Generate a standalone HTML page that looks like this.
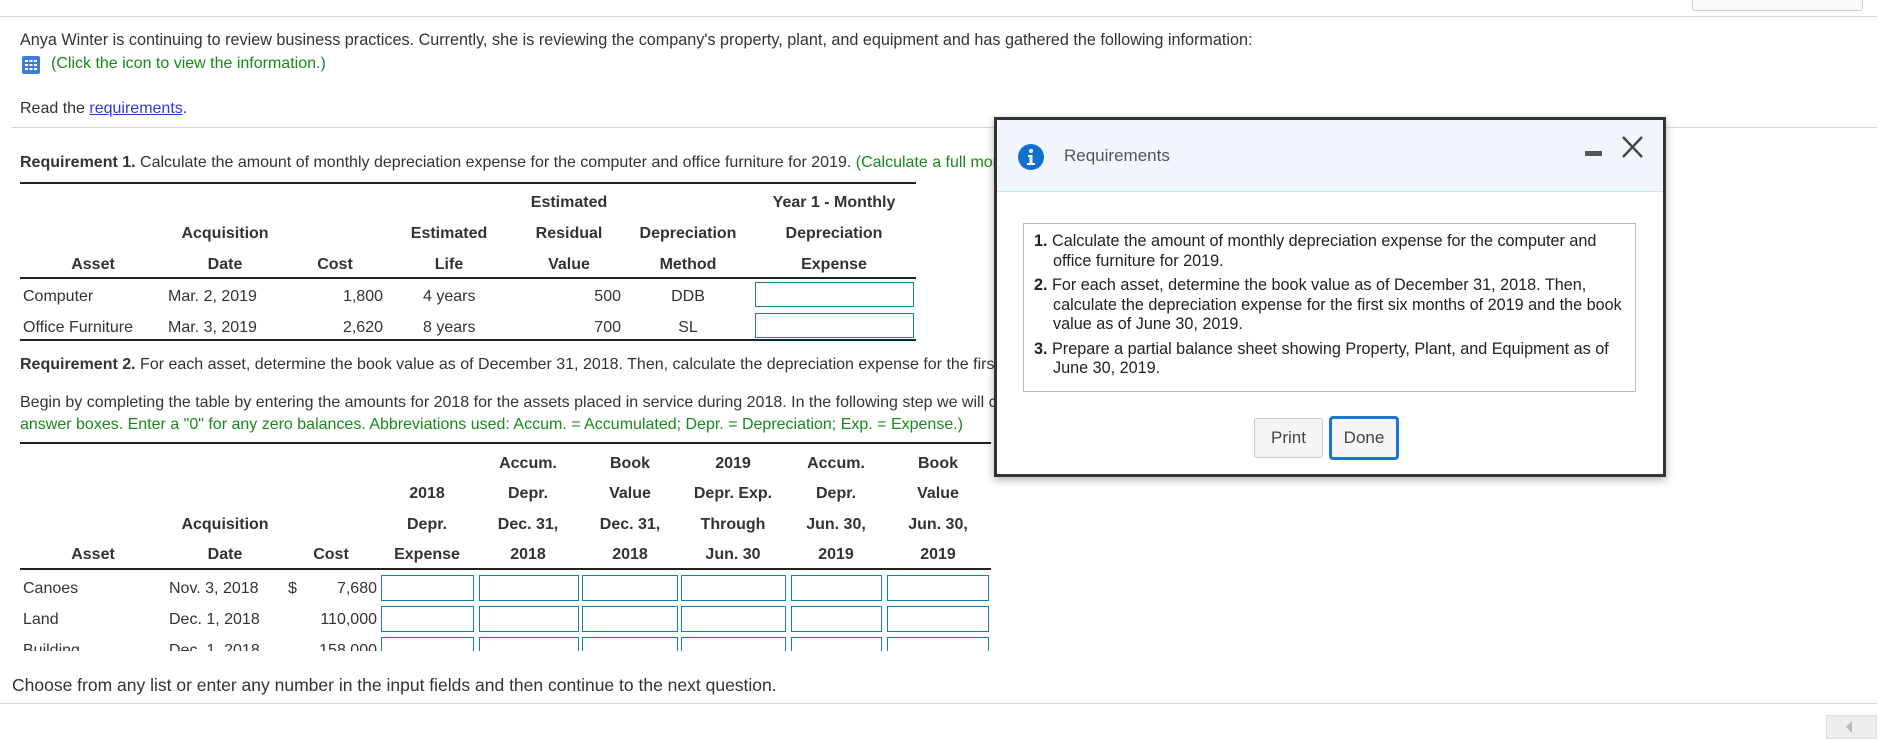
<!DOCTYPE html>
<html><head><meta charset="utf-8"><style>
*{margin:0;padding:0;box-sizing:border-box}
body{width:1877px;height:737px;overflow:hidden;background:#fff;font-family:"Liberation Sans",Arial,sans-serif;font-size:16px;color:#333;position:relative}
.a{position:absolute;white-space:nowrap}
.g{color:#17891a}
.hl{position:absolute;height:2px;background:#222}
.b{font-weight:bold}
.c{transform:translateX(-50%)}
.r{transform:translateX(-100%)}
.in{position:absolute;border:1px solid #1a7ea8;background:#fff}
</style></head><body>
<div style="position:absolute;left:1692px;top:-2px;width:171px;height:13px;border:1px solid #ccc;border-radius:3px;background:#fafafa"></div>
<div style="position:absolute;left:0;top:16px;width:1877px;height:1px;background:#d4d4dc"></div>

<div class="a" style="left:20px;top:31px;font-size:16.2px">Anya Winter is continuing to review business practices. Currently, she is reviewing the company's property, plant, and equipment and has gathered the following information:</div>
<svg class="a" style="left:22px;top:56px" width="18" height="18" viewBox="0 0 18 18"><rect width="18" height="18" rx="2" fill="#3a7fd5"/><g fill="#fff"><rect x="3" y="4" width="3" height="2"/><rect x="7.5" y="4" width="3" height="2"/><rect x="12" y="4" width="3" height="2"/><rect x="3" y="8" width="3" height="2"/><rect x="7.5" y="8" width="3" height="2"/><rect x="12" y="8" width="3" height="2"/><rect x="3" y="12" width="3" height="2"/><rect x="7.5" y="12" width="3" height="2"/><rect x="12" y="12" width="3" height="2"/></g></svg>
<div class="a g" style="left:51px;top:55px">(Click the icon to view the information.)</div>
<div class="a" style="left:20px;top:100px">Read the <span style="color:#2b3ad8;text-decoration:underline">requirements</span>.</div>
<div style="position:absolute;left:12px;top:127px;width:1865px;height:1px;background:#d4d4dc"></div>

<div class="a" style="left:20px;top:154px"><span class="b">Requirement 1.</span> Calculate the amount of monthly depreciation expense for the computer and office furniture for 2019. <span class="g">(Calculate a full month of depreciation in the month the asset was placed in service.)</span></div>

<div class="hl" style="left:20px;top:182px;width:896px"></div>
<div class="a b c" style="left:569px;top:194px">Estimated</div>
<div class="a b c" style="left:834px;top:194px">Year 1 - Monthly</div>
<div class="a b c" style="left:225px;top:225px">Acquisition</div>
<div class="a b c" style="left:449px;top:225px">Estimated</div>
<div class="a b c" style="left:569px;top:225px">Residual</div>
<div class="a b c" style="left:688px;top:225px">Depreciation</div>
<div class="a b c" style="left:834px;top:225px">Depreciation</div>
<div class="a b c" style="left:93px;top:256px">Asset</div>
<div class="a b c" style="left:225px;top:256px">Date</div>
<div class="a b c" style="left:335px;top:256px">Cost</div>
<div class="a b c" style="left:449px;top:256px">Life</div>
<div class="a b c" style="left:569px;top:256px">Value</div>
<div class="a b c" style="left:688px;top:256px">Method</div>
<div class="a b c" style="left:834px;top:256px">Expense</div>
<div class="hl" style="left:20px;top:277px;width:896px"></div>
<div class="a" style="left:23px;top:288px">Computer</div>
<div class="a" style="left:168px;top:288px">Mar. 2, 2019</div>
<div class="a r" style="left:383px;top:288px">1,800</div>
<div class="a" style="left:423px;top:288px">4 years</div>
<div class="a r" style="left:621px;top:288px">500</div>
<div class="a c" style="left:688px;top:288px">DDB</div>
<div class="in" style="left:755px;top:282px;width:159px;height:25px"></div>
<div class="a" style="left:23px;top:319px">Office Furniture</div>
<div class="a" style="left:168px;top:319px">Mar. 3, 2019</div>
<div class="a r" style="left:383px;top:319px">2,620</div>
<div class="a" style="left:423px;top:319px">8 years</div>
<div class="a r" style="left:621px;top:319px">700</div>
<div class="a c" style="left:688px;top:319px">SL</div>
<div class="in" style="left:755px;top:313px;width:159px;height:25px"></div>
<div class="hl" style="left:20px;top:339px;width:896px"></div>

<div class="a" style="left:20px;top:356px"><span class="b">Requirement 2.</span> For each asset, determine the book value as of December 31, 2018. Then, calculate the depreciation expense for the first six months of 2019 and the book value as of June 30, 2019.</div>
<div class="a" style="left:20px;top:394px">Begin by completing the table by entering the amounts for 2018 for the assets placed in service during 2018. In the following step we will calculate the depreciation for 2019 and book value as of June 30, 2019. <span class="g">(Complete all</span></div>
<div class="a g" style="left:20px;top:416px">answer boxes. Enter a "0" for any zero balances. Abbreviations used: Accum. = Accumulated; Depr. = Depreciation; Exp. = Expense.)</div>

<div class="hl" style="left:20px;top:442px;width:971px"></div>
<div class="a b c" style="left:528px;top:455px">Accum.</div>
<div class="a b c" style="left:630px;top:455px">Book</div>
<div class="a b c" style="left:733px;top:455px">2019</div>
<div class="a b c" style="left:836px;top:455px">Accum.</div>
<div class="a b c" style="left:938px;top:455px">Book</div>
<div class="a b c" style="left:427px;top:485px">2018</div>
<div class="a b c" style="left:528px;top:485px">Depr.</div>
<div class="a b c" style="left:630px;top:485px">Value</div>
<div class="a b c" style="left:733px;top:485px">Depr. Exp.</div>
<div class="a b c" style="left:836px;top:485px">Depr.</div>
<div class="a b c" style="left:938px;top:485px">Value</div>
<div class="a b c" style="left:225px;top:516px">Acquisition</div>
<div class="a b c" style="left:427px;top:516px">Depr.</div>
<div class="a b c" style="left:528px;top:516px">Dec. 31,</div>
<div class="a b c" style="left:630px;top:516px">Dec. 31,</div>
<div class="a b c" style="left:733px;top:516px">Through</div>
<div class="a b c" style="left:836px;top:516px">Jun. 30,</div>
<div class="a b c" style="left:938px;top:516px">Jun. 30,</div>
<div class="a b c" style="left:93px;top:546px">Asset</div>
<div class="a b c" style="left:225px;top:546px">Date</div>
<div class="a b c" style="left:331px;top:546px">Cost</div>
<div class="a b c" style="left:427px;top:546px">Expense</div>
<div class="a b c" style="left:528px;top:546px">2018</div>
<div class="a b c" style="left:630px;top:546px">2018</div>
<div class="a b c" style="left:733px;top:546px">Jun. 30</div>
<div class="a b c" style="left:836px;top:546px">2019</div>
<div class="a b c" style="left:938px;top:546px">2019</div>
<div class="hl" style="left:20px;top:568px;width:971px"></div>

<div style="position:absolute;left:0;top:570px;width:1000px;height:81px;overflow:hidden">
<div class="a" style="left:23px;top:10px">Canoes</div>
<div class="a" style="left:169px;top:10px">Nov. 3, 2018</div>
<div class="a" style="left:288px;top:10px">$</div>
<div class="a r" style="left:377px;top:10px">7,680</div>
<div class="a" style="left:23px;top:41px">Land</div>
<div class="a" style="left:169px;top:41px">Dec. 1, 2018</div>
<div class="a r" style="left:377px;top:41px">110,000</div>
<div class="a" style="left:23px;top:72px">Building</div>
<div class="a" style="left:169px;top:72px">Dec. 1, 2018</div>
<div class="a r" style="left:377px;top:72px">158,000</div>
<div class="in" style="left:381px;top:5px;width:93px;height:26px"></div><div class="in" style="left:479px;top:5px;width:100px;height:26px"></div><div class="in" style="left:582px;top:5px;width:96px;height:26px"></div><div class="in" style="left:681px;top:5px;width:105px;height:26px"></div><div class="in" style="left:791px;top:5px;width:91px;height:26px"></div><div class="in" style="left:887px;top:5px;width:102px;height:26px"></div>
<div class="in" style="left:381px;top:36px;width:93px;height:26px"></div><div class="in" style="left:479px;top:36px;width:100px;height:26px"></div><div class="in" style="left:582px;top:36px;width:96px;height:26px"></div><div class="in" style="left:681px;top:36px;width:105px;height:26px"></div><div class="in" style="left:791px;top:36px;width:91px;height:26px"></div><div class="in" style="left:887px;top:36px;width:102px;height:26px"></div>
<div class="in" style="left:381px;top:67px;width:93px;height:26px"></div><div class="in" style="left:479px;top:67px;width:100px;height:26px"></div><div class="in" style="left:582px;top:67px;width:96px;height:26px"></div><div class="in" style="left:681px;top:67px;width:105px;height:26px"></div><div class="in" style="left:791px;top:67px;width:91px;height:26px"></div><div class="in" style="left:887px;top:67px;width:102px;height:26px"></div>
</div>

<div class="a" style="left:12px;top:675px;font-size:17.5px">Choose from any list or enter any number in the input fields and then continue to the next question.</div>
<div style="position:absolute;left:0;top:703px;width:1877px;height:1px;background:#d4d4dc"></div>
<div style="position:absolute;left:1826px;top:715px;width:51px;height:24px;background:#eee;border:1px solid #ddd"></div>
<svg class="a" style="left:1843px;top:719px" width="12" height="16"><path d="M9 2 L3 8 L9 14 Z" fill="#bbb"/></svg>

<!-- modal -->
<div style="position:absolute;left:994px;top:117px;width:672px;height:360px;border:3px solid #333;background:#fff;box-shadow:0 3px 8px rgba(0,0,0,.3)">
  <div style="position:absolute;left:0;top:0;width:666px;height:72px;background:#f1f6fd;border-bottom:1px solid #cfe3f5"></div>
  <svg class="a" style="left:21px;top:24px" width="26" height="26" viewBox="0 0 26 26"><circle cx="13" cy="13" r="13" fill="#1170cf"/><circle cx="13" cy="7" r="2" fill="#fff"/><path d="M10 11h4.5v8H17v2H9v-2h2.5v-6H10z" fill="#fff"/></svg>
  <div class="a" style="left:67px;top:26px;font-size:17px;color:#555">Requirements</div>
  <div style="position:absolute;left:588px;top:31px;width:17px;height:5px;background:#555"></div>
  <svg class="a" style="left:624px;top:16px" width="23" height="22"><path d="M2 1 L21 21 M21 1 L2 21" stroke="#444" stroke-width="2.4"/></svg>
  <div style="position:absolute;left:26px;top:103px;width:613px;height:169px;border:1px solid #bbb"></div>
  <div class="a" style="left:37px;top:112px;font-size:16.2px;line-height:19.5px;white-space:normal;width:600px;color:#222">
    <div style="padding-left:19px;text-indent:-19px"><b>1.</b> Calculate the amount of monthly depreciation expense for the computer and<br>office furniture for 2019.</div>
    <div style="padding-left:19px;text-indent:-19px;margin-top:5px"><b>2.</b> For each asset, determine the book value as of December 31, 2018. Then,<br>calculate the depreciation expense for the first six months of 2019 and the book<br>value as of June 30, 2019.</div>
    <div style="padding-left:19px;text-indent:-19px;margin-top:5px"><b>3.</b> Prepare a partial balance sheet showing Property, Plant, and Equipment as of<br>June 30, 2019.</div>
  </div>
  <div style="position:absolute;left:257px;top:298px;width:69px;height:40px;border:1px solid #ccc;border-radius:3px;background:#f5f5f5;font-size:17px;color:#444;text-align:center;line-height:38px">Print</div>
  <div style="position:absolute;left:332px;top:296px;width:70px;height:44px;border:3px solid #1b76d0;border-radius:4px;background:#f5f5f5;font-size:17px;color:#444;text-align:center;line-height:38px">Done</div>
</div>
</body></html>
